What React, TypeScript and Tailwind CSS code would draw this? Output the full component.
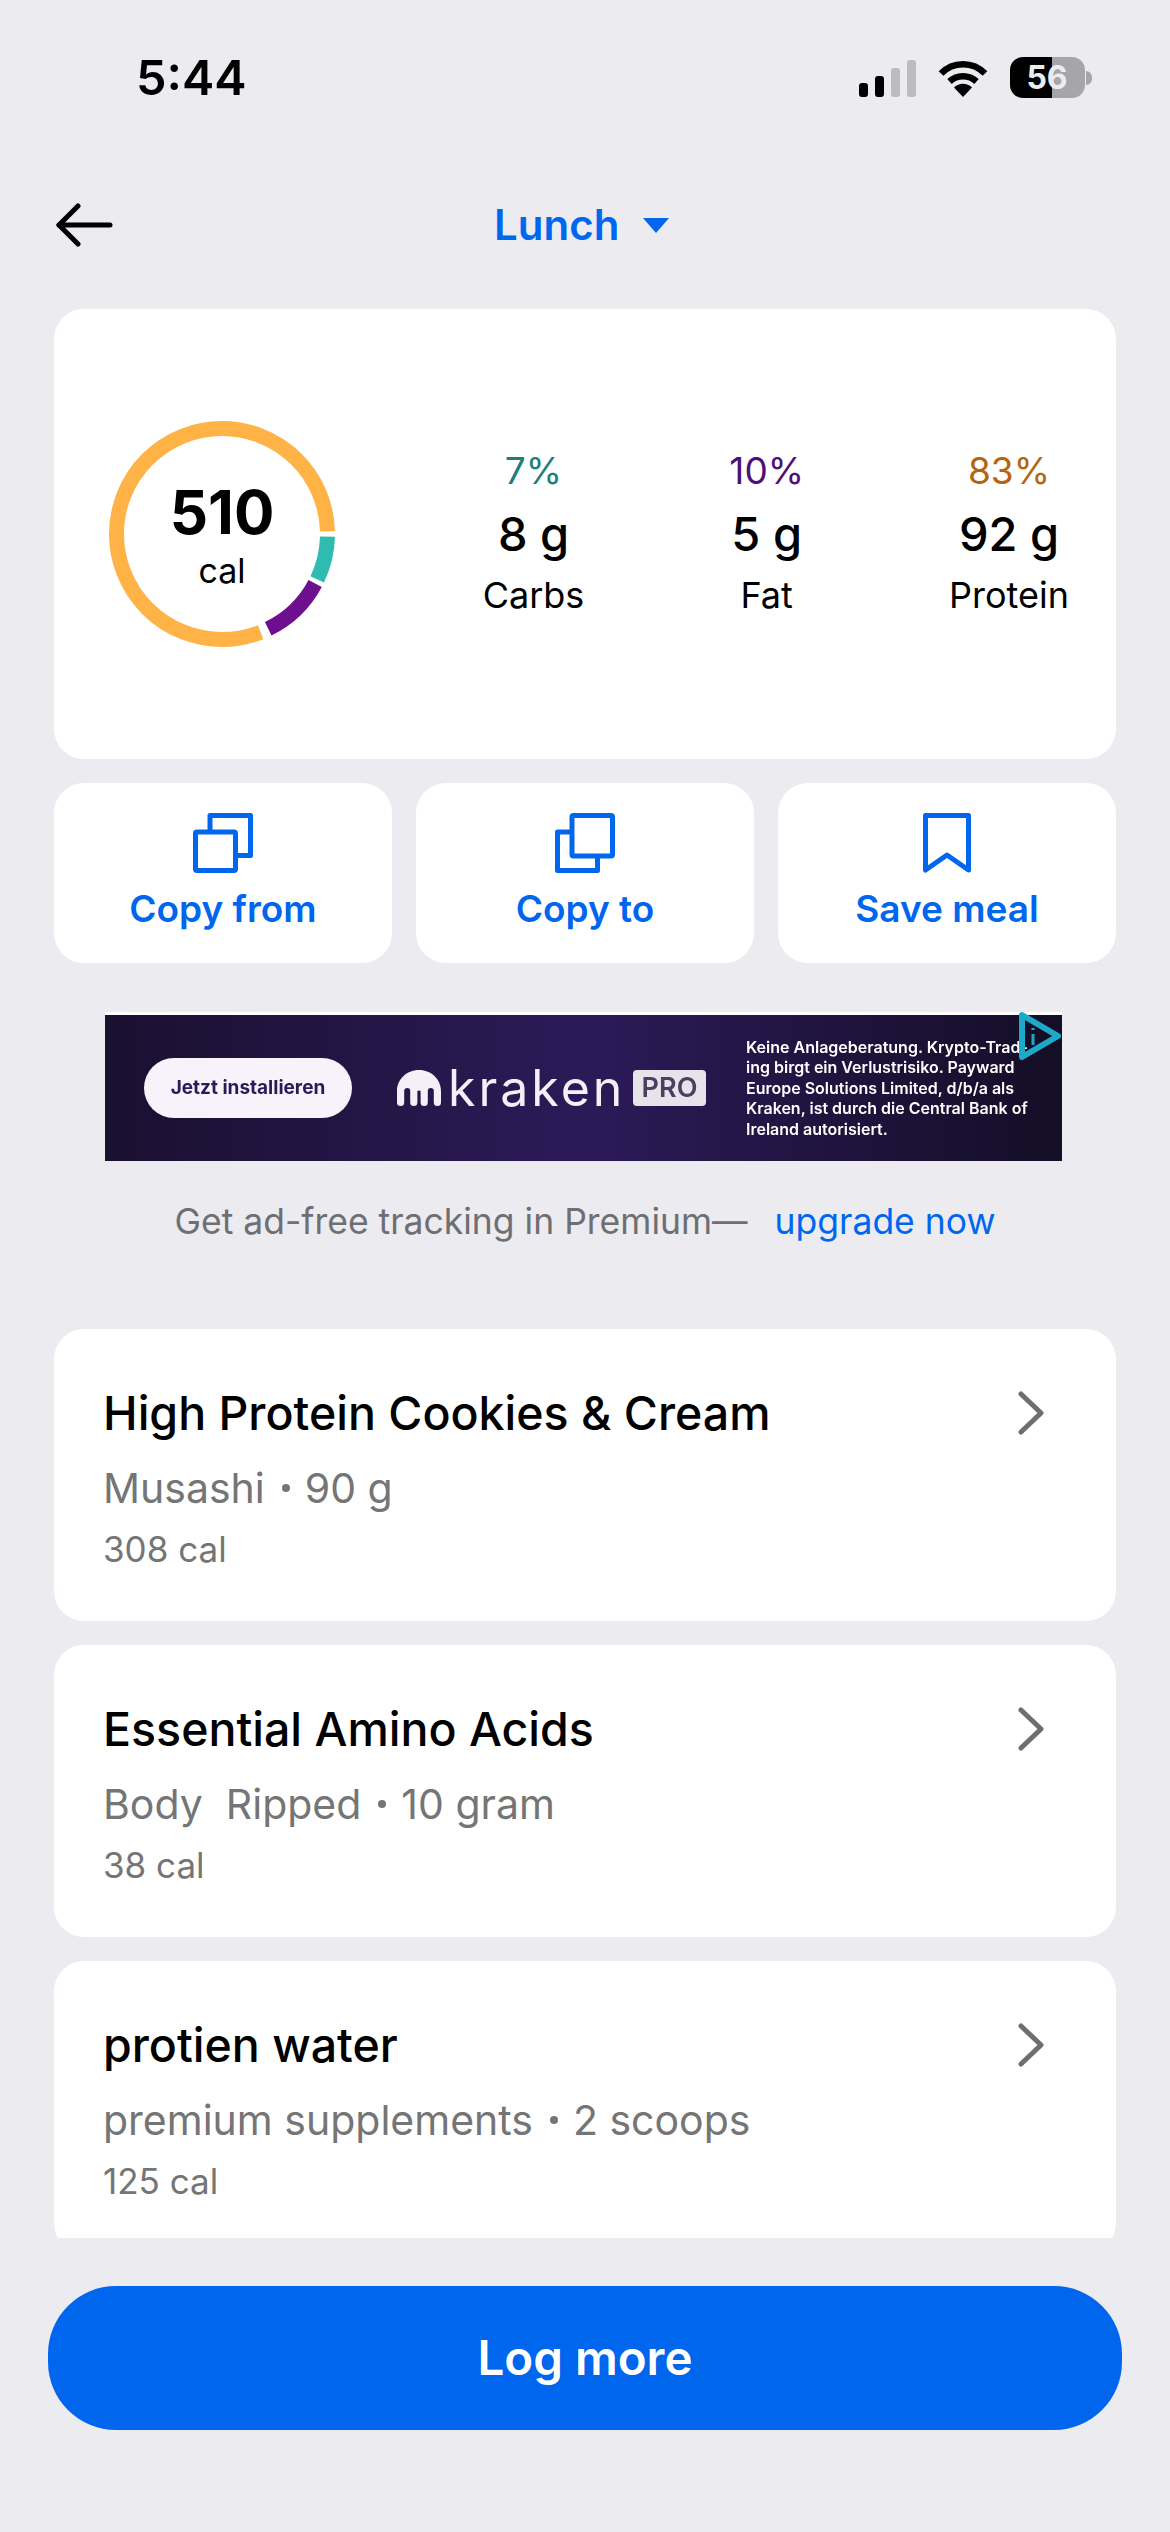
const font = { fontFamily: "Inter, 'Liberation Sans', sans-serif" };

const macros = [
  { pct: "7%", grams: "8 g", label: "Carbs", color: "text-[#1f7f78]" },
  { pct: "10%", grams: "5 g", label: "Fat", color: "text-[#4f0f78]" },
  { pct: "83%", grams: "92 g", label: "Protein", color: "text-[#b5650f]" },
];

const foods = [
  { name: "High Protein Cookies & Cream", brand: "Musashi", amount: "90 g", cal: "308 cal" },
  { name: "Essential Amino Acids", brand: "Body  Ripped", amount: "10 gram", cal: "38 cal" },
  { name: "protien water", brand: "premium supplements", amount: "2 scoops", cal: "125 cal" },
];

function StatusBar() {
  return (
    <div className="flex h-[150px] items-start pt-[57px] pl-[136px]">
      <div className="h-[41px] text-[48.5px] leading-[41px] font-semibold text-black">5:44</div>
      <div className="ml-auto mr-[78px] flex items-center gap-[22px]">
        <div className="flex h-[38px] items-end gap-[6.5px]">
          <div className="h-[14px] w-[9.5px] rounded-[3px] bg-black" />
          <div className="h-[21px] w-[9.5px] rounded-[3px] bg-black" />
          <div className="h-[29px] w-[9.5px] rounded-[3px] bg-[#bcbcc0]" />
          <div className="h-[37px] w-[9.5px] rounded-[3px] bg-[#bcbcc0]" />
        </div>
        <svg width="50" height="38" viewBox="0 0 50 38" className="shrink-0">
          <path d="M3 14.5 C15 2 35 2 47 14.5" fill="none" stroke="#000" strokeWidth="6.5" />
          <path d="M11.5 22.5 C19 15.5 31 15.5 38.5 22.5" fill="none" stroke="#000" strokeWidth="6.5" />
          <path d="M16 28.5 C21 23.5 29 23.5 34 28.5 L25 38 Z" fill="#000" />
        </svg>
        <div className="flex items-center">
          <div className="relative flex h-[41px] w-[75px] overflow-hidden rounded-[13px]">
            <div className="w-[42px] bg-black" />
            <div className="flex-1 bg-[#a6a6aa]" />
            <div className="absolute inset-0 flex items-center justify-center pr-[1px] text-[32px] font-bold text-[#ececef]">56</div>
          </div>
          <div className="h-[14px] w-[6px] rounded-r-full bg-[#a6a6aa] ml-[1px]" />
        </div>
      </div>
    </div>
  );
}

function NavBar() {
  return (
    <div className="flex h-[150px] items-center pl-[56px] mb-[9px]">
      <svg width="58" height="44" viewBox="0 0 58 44" fill="none" stroke="#000" strokeWidth="5" strokeLinecap="round" strokeLinejoin="round">
        <path d="M54 22 H3" />
        <path d="M22 3 L3 22 L22 41" />
      </svg>
      <div className="ml-[380px] flex items-center gap-[24px]">
        <span className="mt-[-2px] text-[42px] font-semibold text-[#0066ee]">Lunch</span>
        <svg width="26" height="15" viewBox="0 0 26 15" fill="#0066ee">
          <path d="M0 0 H26 L13 15 Z" />
        </svg>
      </div>
    </div>
  );
}

function CalorieRing() {
  const arc = "fill-none";
  return (
    <div className="relative h-[226px] w-[226px] shrink-0">
      <svg width="226" height="226" viewBox="0 0 226 226">
        <circle cx="113" cy="113" r="105.5" pathLength={360} className={arc} stroke="#2fbcb0" strokeWidth="15" strokeDasharray="24 336" strokeDashoffset="-1.5" />
        <circle cx="113" cy="113" r="105.5" pathLength={360} className={arc} stroke="#6d0f8f" strokeWidth="15" strokeDasharray="36 324" strokeDashoffset="-28" />
        <circle cx="113" cy="113" r="105.5" pathLength={360} className={arc} stroke="#ffb347" strokeWidth="15" strokeDasharray="290 70" strokeDashoffset="-68.5" />
      </svg>
      <div className="absolute inset-0 flex flex-col items-center pt-[56px]">
        <div className="text-[60px] leading-[70px] font-bold text-black">510</div>
        <div className="mt-[2px] text-[34px] leading-[44px] text-black">cal</div>
      </div>
    </div>
  );
}

function CopyIcon({ frontFirst }: { frontFirst: boolean }) {
  return (
    <svg width="60" height="60" viewBox="0 0 60 60" fill="none" stroke="#0066ee" strokeWidth="5" strokeLinejoin="round">
      {frontFirst ? (
        <>
          <path d="M17 17 V2.5 H57.5 V42.5 H43" />
          <rect x="2.5" y="19" width="40" height="38.5" rx="1.5" />
        </>
      ) : (
        <>
          <path d="M16 19 H2.5 V57.5 H42.5 V43" />
          <rect x="17" y="2.5" width="40.5" height="40.5" rx="1.5" />
        </>
      )}
    </svg>
  );
}

function BookmarkIcon() {
  return (
    <svg width="48" height="60" viewBox="0 0 48 60" fill="none" stroke="#0066ee" strokeWidth="5" strokeLinejoin="round">
      <path d="M2.5 57 V2.5 H45.5 V57 L24 42 Z" />
    </svg>
  );
}

function ActionButton({ label, icon }: { label: string; icon: React.ReactNode }) {
  return (
    <div className="flex h-[180px] flex-1 flex-col items-center rounded-[30px] bg-white pt-[30px]">
      <div className="h-[60px]">{icon}</div>
      <div className="mt-[14px] text-[37px] leading-[44px] font-semibold text-[#0066ee]">{label}</div>
    </div>
  );
}

function KrakenAd() {
  return (
    <div className="relative ml-[51px] mt-[49px] flex h-[149px] w-[957px] items-center border-t-[3px] border-t-white bg-[linear-gradient(90deg,#1a1030_0%,#2c1a58_50%,#140e26_100%)] pl-[39px]">
      <div className="flex h-[60px] w-[208px] items-center justify-center rounded-[30px] bg-[#f7f3fb] text-[19px] font-bold whitespace-nowrap text-[#2c1a58] blur-[0.4px]">Jetzt installieren</div>
      <svg width="44" height="37" viewBox="0 0 44 37" fill="#f3f0f7" className="ml-[45px] shrink-0">
        <path d="M22 0 C9.5 0 0 9.5 0 21 V32.5 a3.6 3.6 0 0 0 7.2 0 V21 a3 3 0 0 1 6 0 V32.5 a3.6 3.6 0 0 0 7.2 0 V21 a3 3 0 0 1 3.2 0 V32.5 a3.6 3.6 0 0 0 7.2 0 V21 a3 3 0 0 1 6 0 V32.5 a3.6 3.6 0 0 0 7.2 0 V21 C44 9.5 34.5 0 22 0 Z" />
      </svg>
      <div className="ml-[7px] w-[178px] text-[50px] leading-[50px] font-normal tracking-[3px] text-[#f3f0f7] blur-[0.4px]">kraken</div>
      <div className="ml-[7px] flex h-[36px] w-[73px] items-center justify-center rounded-[4px] bg-[#e6e3ea] text-[27px] font-semibold text-[#4a4060] blur-[0.4px]">PRO</div>
      <div className="ml-[40px] w-[290px] text-[16px] leading-[20.5px] font-semibold whitespace-nowrap text-white blur-[0.4px]">
        <div>Keine Anlageberatung. Krypto-Trad-</div>
        <div>ing birgt ein Verlustrisiko. Payward</div>
        <div>Europe Solutions Limited, d/b/a als</div>
        <div>Kraken, ist durch die Central Bank of</div>
        <div>Ireland autorisiert.</div>
      </div>
      <svg width="44" height="48" viewBox="0 0 44 48" fill="none" className="absolute top-[-3px] right-[0px]">
        <path d="M4 3 L40 24 L4 45 Z" stroke="#1fa9c9" strokeWidth="6" strokeLinejoin="round" />
        <path d="M15 16 V18 M15 22 V33" stroke="#1fa9c9" strokeWidth="3" />
      </svg>
    </div>
  );
}

function FoodCard({ name, brand, amount, cal }: { name: string; brand: string; amount: string; cal: string }) {
  return (
    <div className="flex h-[292px] shrink-0 items-start justify-between rounded-[30px] bg-white pt-[56px] pr-[71px] pl-[49px]">
      <div>
        <div className="text-[46.5px] leading-[56px] font-[450] text-black">{name}</div>
        <div className="mt-[23px] flex items-center text-[41px] leading-[48px] whitespace-pre text-[#757575]">
          <span>{brand}</span>
          <span className="ml-[17px] mr-[15px] h-[8px] w-[8px] rounded-full bg-[#757575]" />
          <span>{amount}</span>
        </div>
        <div className="mt-[15px] text-[35px] leading-[44px] text-[#757575]">{cal}</div>
      </div>
      <svg width="28" height="44" viewBox="0 0 28 44" fill="none" stroke="#6e6e6e" strokeWidth="5" strokeLinecap="round" strokeLinejoin="round" className="mt-[6px] shrink-0">
        <path d="M4 3 L24 22 L4 41" />
      </svg>
    </div>
  );
}

export default function App() {
  return (
    <div className="h-[2532px] w-full overflow-hidden bg-[#ebebf0]" style={font}>
      <StatusBar />
      <NavBar />
      <div className="flex flex-col px-[54px]">
        <div className="flex h-[450px] items-center justify-between rounded-[30px] bg-white pr-[47px] pl-[55px]">
          <CalorieRing />
          <div className="flex gap-[145px] pb-[2px]">
            {macros.map((m) => (
              <div key={m.label} className="flex flex-col items-center">
                <div className={`text-[37px] leading-[44px] ${m.color}`}>{m.pct}</div>
                <div className="mt-[13px] text-[47px] leading-[56px] font-medium whitespace-nowrap text-black">{m.grams}</div>
                <div className="mt-[11px] text-[36px] leading-[44px] text-black">{m.label}</div>
              </div>
            ))}
          </div>
        </div>
        <div className="mt-[24px] flex gap-[24px]">
          <ActionButton label="Copy from" icon={<CopyIcon frontFirst={true} />} />
          <ActionButton label="Copy to" icon={<CopyIcon frontFirst={false} />} />
          <ActionButton label="Save meal" icon={<BookmarkIcon />} />
        </div>
        <KrakenAd />
        <div className="mt-[36px] flex h-[50px] items-center justify-center text-[35.5px]">
          <span className="text-[#6e6e73]">Get ad-free tracking in Premium—</span>
          <span className="ml-[27px] text-[#0066ee]">upgrade now</span>
        </div>
        <div className="mt-[82px] flex h-[909px] flex-col gap-[24px] overflow-hidden">
          {foods.map((f) => (
            <FoodCard key={f.name} name={f.name} brand={f.brand} amount={f.amount} cal={f.cal} />
          ))}
        </div>
        <div className="-mx-[6px] mt-[48px] flex h-[144px] items-center justify-center rounded-[68px] bg-[#0066ee] text-[47.5px] font-semibold text-white">Log more</div>
      </div>
    </div>
  );
}
